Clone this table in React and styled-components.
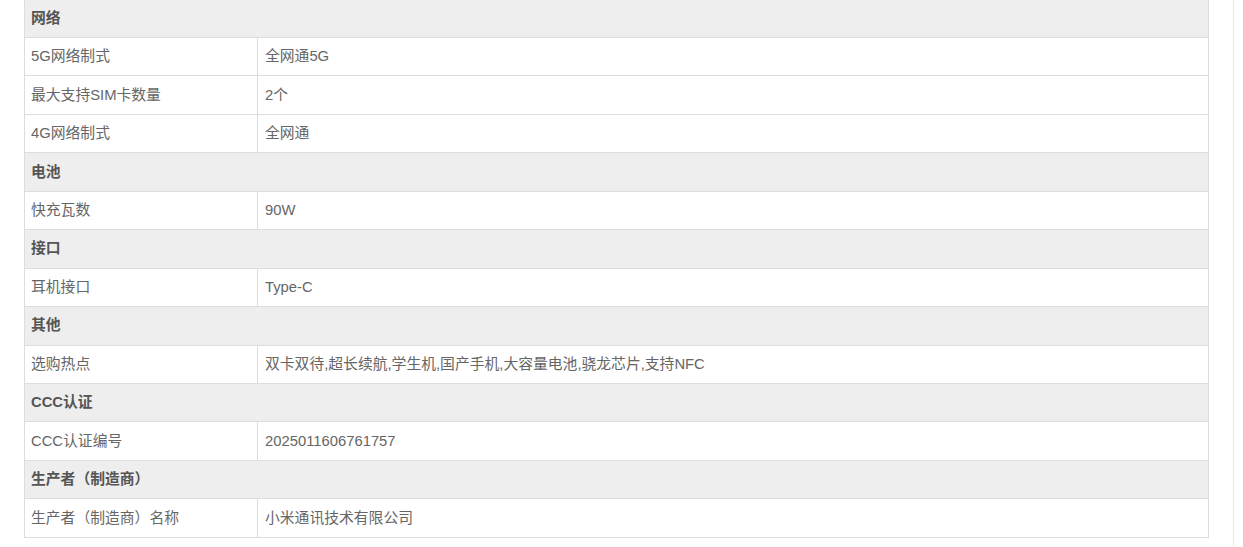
import styled, { createGlobalStyle } from "styled-components";

const GlobalStyle = createGlobalStyle`
  html, body {
    margin: 0;
    padding: 0;
    background: #fff;
    overflow: hidden;
  }
  body {
    font-family: "Liberation Sans", Arial, "Noto Sans CJK SC", sans-serif;
  }
`;

const specs = [
  {
    group: "网络",
    items: [
      ["5G网络制式", "全网通5G"],
      ["最大支持SIM卡数量", "2个"],
      ["4G网络制式", "全网通"],
    ],
  },
  { group: "电池", items: [["快充瓦数", "90W"]] },
  { group: "接口", items: [["耳机接口", "Type-C"]] },
  {
    group: "其他",
    items: [["选购热点", "双卡双待,超长续航,学生机,国产手机,大容量电池,骁龙芯片,支持NFC"]],
  },
  { group: "CCC认证", items: [["CCC认证编号", "2025011606761757"]] },
  { group: "生产者（制造商）", items: [["生产者（制造商）名称", "小米通讯技术有限公司"]] },
];

const App = () => {
  return (
    <>
      <GlobalStyle />
      <Page>
        <SpecTable>
          <tbody>
            {specs.map((sec) => (
              <Section key={sec.group} group={sec.group} items={sec.items} />
            ))}
          </tbody>
        </SpecTable>
      </Page>
    </>
  );
};

const Section = ({ group, items }) => (
  <>
    <Row>
      <GroupCell colSpan={2}>{group}</GroupCell>
    </Row>
    {items.map(([name, value]) => (
      <Row key={name}>
        <NameCell>{name}</NameCell>
        <Cell>{value}</Cell>
      </Row>
    ))}
  </>
);

const Page = styled.div`
  width: 1234px;
  height: 547px;
  border-right: 1px solid #e8e8e8;
  padding-left: 24px;
  box-sizing: border-box;
`;

const SpecTable = styled.table`
  width: 1185px;
  border-collapse: collapse;
  margin-top: -1.5px;
  font-size: 14.8px;
  color: #666;
`;

const Row = styled.tr`
  height: 38.46px;
`;

const Cell = styled.td`
  border: 1px solid #ddd;
  padding: 0 7px;
  line-height: 17px;
  text-align: left;
  vertical-align: middle;
`;

const NameCell = styled(Cell)`
  width: 219px;
  padding-left: 6px;
`;

const GroupCell = styled(Cell)`
  background: #eee;
  font-weight: bold;
  color: #555;
  padding-left: 6px;
`;

export default App;
